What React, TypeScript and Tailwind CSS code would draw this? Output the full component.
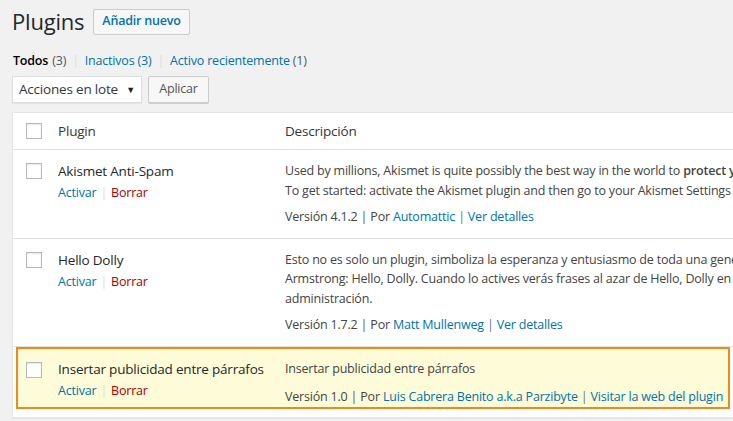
import React from 'react';

const font = { fontFamily: '"Segoe UI", "Open Sans", "Noto Sans", sans-serif' };

function Checkbox() {
  return <span className="block w-4 h-4 shrink-0 bg-white border border-[#b4b9be] shadow-[inset_0_1px_2px_rgba(0,0,0,0.1)]" />;
}

function RowActions() {
  return (
    <div className="text-[12.5px] leading-[19.5px] mt-[2px]">
      <a className="text-[#0073aa]">Activar</a>
      <span className="text-[#ddd] mx-[4px]">|</span>
      <a className="text-[#a00]">Borrar</a>
    </div>
  );
}

const plugins = [
  {
    name: 'Akismet Anti-Spam',
    lines: [
      <>Used by millions, Akismet is quite possibly the best way in the world to <strong className="font-semibold">protect your blog from spam</strong>. It keeps your site protected even while you sleep.</>,
      <>To get started: activate the Akismet plugin and then go to your Akismet Settings page to set up your API key.</>,
    ],
    version: '4.1.2',
    author: 'Automattic',
    link: 'Ver detalles',
  },
  {
    name: 'Hello Dolly',
    lines: [
      <>Esto no es solo un plugin, simboliza la esperanza y entusiasmo de toda una generación resumido en dos palabras cantadas más famosamente por Louis</>,
      <>Armstrong: Hello, Dolly. Cuando lo actives verás frases al azar de Hello, Dolly en la parte superior derecha de cada página de tu pantalla de</>,
      <>administración.</>,
    ],
    version: '1.7.2',
    author: 'Matt Mullenweg',
    link: 'Ver detalles',
  },
];

function VersionLine({ version, author, link }: { version: string; author: string; link: string }) {
  return (
    <div className="text-[12.5px] leading-[19.5px] text-[#444] whitespace-nowrap">
      Versión {version} <span className="text-[#555]">|</span> Por <a className="text-[#0073aa]">{author}</a>{' '}
      <span className="text-[#4a7fa0]">|</span> <a className="text-[#0073aa]">{link}</a>
    </div>
  );
}

export default function App() {
  return (
    <div className="w-[733px] h-[421px] overflow-hidden bg-[#f1f1f1] text-[#444] tracking-[-0.2px]" style={font}>
      <div className="pl-3">
        {/* heading */}
        <div className="flex items-center pt-[8px] h-[35px]">
          <h1 className="text-[22px] leading-[26px] text-[#23282d] font-normal -mt-[2px]">Plugins</h1>
          <button className="ml-[9px] h-[26px] px-[8px] text-[12.5px] font-semibold text-[#0073aa] bg-[#f7f7f7] border border-[#ccc] rounded-[2px]">
            Añadir nuevo
          </button>
        </div>

        {/* filters */}
        <div className="flex items-center mt-[16px] h-[20px] text-[12.5px] whitespace-nowrap">
          <span className="font-semibold text-black pl-px">Todos</span>
          <span className="text-[#555] ml-[4px]">(3)</span>
          <span className="text-[#ddd] mx-[6px]">|</span>
          <a className="text-[#0073aa]">Inactivos (3)</a>
          <span className="text-[#ddd] mx-[6px]">|</span>
          <a className="text-[#0073aa]">Activo recientemente <span className="text-[#555]">(1)</span></a>
        </div>

        {/* bulk actions */}
        <div className="flex items-center gap-[6px] mt-[5px]">
          <div className="w-[130px] h-[27px] bg-white border border-[#ddd] shadow-[0_1px_1px_rgba(0,0,0,0.05)] flex items-center justify-between pl-[6px] pr-[6px] text-[13.5px] text-[#32373c]">
            <span>Acciones en lote</span>
            <span className="text-[9px] text-[#222]">▼</span>
          </div>
          <button className="w-[61px] h-[27px] text-[12.5px] text-[#555] bg-[#f7f7f7] border border-[#ccc] rounded-[2px] shadow-[0_1px_0_#ccc]">
            Aplicar
          </button>
        </div>

        {/* table */}
        <div className="mt-[9px] w-[900px] bg-white border border-[#e5e5e5] shadow-[0_1px_1px_rgba(0,0,0,0.04)]">
          <div className="flex items-center h-[37px] border-b border-[#e1e1e1] text-[13.5px] text-[#32373c]">
            <div className="pl-[13px] shrink-0"><Checkbox /></div>
            <div className="w-[227px] shrink-0 ml-[16px] pt-px">Plugin</div>
            <div className="pt-px">Descripción</div>
          </div>

          {plugins.map((p) => (
            <div key={p.name} className="flex pt-[11px] pb-[11px] border-b border-[#e1e1e1]">
              <div className="pl-[13px] pt-[2px] shrink-0"><Checkbox /></div>
              <div className="w-[227px] shrink-0 ml-[16px]">
                <div className="text-[13.5px] leading-[20px] text-[#23282d]">{p.name}</div>
                <RowActions />
              </div>
              <div className="text-[12.5px] leading-[19.5px] text-[#444]">
                {p.lines.map((l, i) => (
                  <div key={i} className="whitespace-nowrap">{l}</div>
                ))}
                <div className="mt-[7px]">
                  <VersionLine version={p.version} author={p.author} link={p.link} />
                </div>
              </div>
            </div>
          ))}

          <div className="pl-[3px] pb-[8px]">
            <div className="flex w-[714px] h-[62px] bg-[#fefcd8] border-2 border-[#f0891a] pt-[10px]">
              <div className="pl-[8px] pt-[3px] shrink-0"><Checkbox /></div>
              <div className="w-[227px] shrink-0 ml-[16px]">
                <div className="text-[13.5px] leading-[20px] text-[#23282d] whitespace-nowrap">Insertar publicidad entre párrafos</div>
                <RowActions />
              </div>
              <div className="text-[12.5px] leading-[19.5px] text-[#444]">
                <div>Insertar publicidad entre párrafos</div>
                <div className="mt-[9px]">
                  <VersionLine version="1.0" author="Luis Cabrera Benito a.k.a Parzibyte" link="Visitar la web del plugin" />
                </div>
              </div>
            </div>
          </div>
        </div>
      </div>
    </div>
  );
}
